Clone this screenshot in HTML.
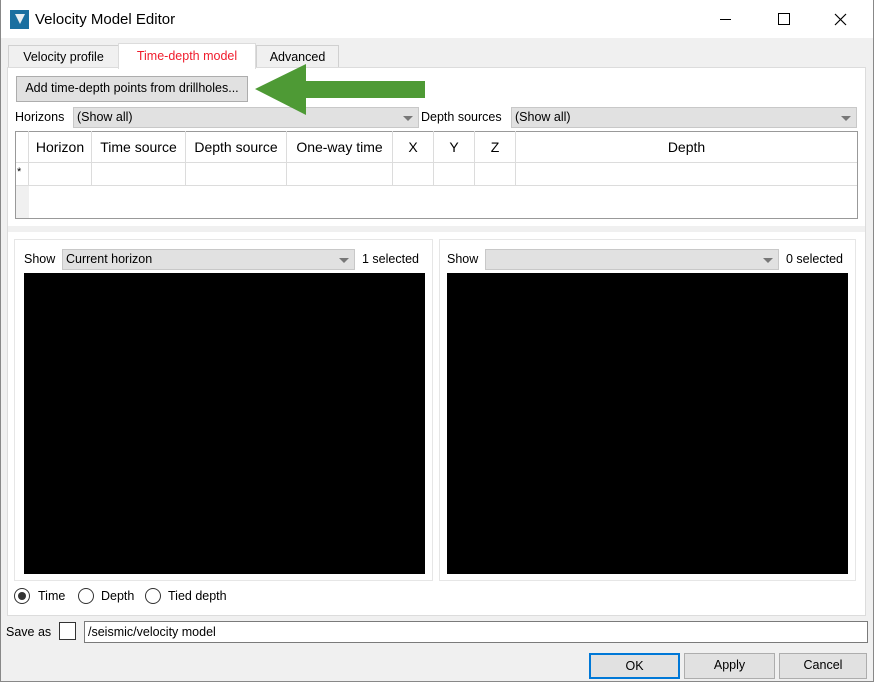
<!DOCTYPE html>
<html><head><style>
*{box-sizing:border-box}
body{margin:0;width:874px;height:682px;background:#f0f0f0;font-family:"Liberation Sans",sans-serif;font-size:12.5px;color:#000;position:relative;overflow:hidden}
.a{position:absolute}
.combo{position:absolute;background:#e1e1e1;border:1px solid #c8c8c8;padding:2px 0 0 3px;height:21px}
.combo:after{content:"";position:absolute;right:5px;top:8px;border-left:5px solid transparent;border-right:5px solid transparent;border-top:5px solid #777}
.btn{position:absolute;background:#e1e1e1;border:1px solid #adadad;text-align:center;line-height:22px}
.rad{position:absolute;width:16px;height:16px;border:1px solid #333;border-radius:50%;background:#fff}
.th{position:absolute;top:131px;height:32px;border-right:1px solid #dcdcdc;border-bottom:1px solid #dcdcdc;text-align:center;line-height:32px;font-size:14px}
.td{position:absolute;top:163px;height:23px;border-right:1px solid #dcdcdc;border-bottom:1px solid #dcdcdc}
</style></head><body>
<div class="a" style="left:0;top:0;width:874px;height:38px;background:#fff"></div>
<div class="a" style="left:10px;top:10px;width:19px;height:19px;background:#1a6fa0"></div>
<div class="a" style="left:15px;top:14px;border-left:5px solid transparent;border-right:5px solid transparent;border-top:10px solid #e8eef2"></div>
<div class="a" style="left:35px;top:11px;font-size:15px">Velocity Model Editor</div>
<div class="a" style="left:720px;top:19px;width:11px;height:1px;background:#000"></div>
<div class="a" style="left:778px;top:13px;width:12px;height:12px;border:1px solid #000"></div>
<svg class="a" style="left:834px;top:13px" width="13" height="13"><path d="M1,1 L12,12 M12,1 L1,12" stroke="#000" stroke-width="1.2"/></svg>
<div class="a" style="left:0;top:0;width:874px;height:682px;border:1px solid #888;border-top:none;pointer-events:none"></div>

<div class="a" style="left:8px;top:45px;width:111px;height:23px;border:1px solid #d0d0d0;background:#f0f0f0;text-align:center;line-height:22px">Velocity profile</div>
<div class="a" style="left:256px;top:45px;width:83px;height:23px;border:1px solid #d0d0d0;background:#f0f0f0;text-align:center;line-height:22px">Advanced</div>
<div class="a" style="left:7px;top:67px;width:859px;height:549px;background:#fff;border:1px solid #dcdcdc"></div>
<div class="a" style="left:118px;top:43px;width:138px;height:26px;background:#fff;border:1px solid #dcdcdc;border-bottom:none;text-align:center;line-height:24px;color:#f01c2c">Time-depth model</div>

<div class="btn" style="left:16px;top:76px;width:232px;height:26px">Add time-depth points from drillholes...</div>

<div class="a" style="left:15px;top:110px">Horizons</div>
<div class="combo" style="left:73px;top:107px;width:346px">(Show all)</div>
<div class="a" style="left:421px;top:110px">Depth sources</div>
<div class="combo" style="left:511px;top:107px;width:346px">(Show all)</div>
<svg class="a" style="left:254px;top:63px" width="174" height="53"><polygon points="1,26 52,1 52,18 171,18 171,35 52,35 52,52" fill="#4e9a35"/></svg>

<div class="a" style="left:15px;top:131px;width:843px;height:88px;border:1px solid #999;background:#fff"></div>
<div class="a" style="left:16px;top:186px;width:13px;height:32px;background:#f0f0f0"></div>
<div class="th" style="left:16px;width:13px"></div>
<div class="th" style="left:29px;width:63px">Horizon</div>
<div class="th" style="left:92px;width:94px">Time source</div>
<div class="th" style="left:186px;width:101px">Depth source</div>
<div class="th" style="left:287px;width:106px">One-way time</div>
<div class="th" style="left:393px;width:41px">X</div>
<div class="th" style="left:434px;width:41px">Y</div>
<div class="th" style="left:475px;width:41px">Z</div>
<div class="th" style="left:516px;width:341px;border-right:none">Depth</div>
<div class="td" style="left:16px;width:13px;font-size:11px;padding:3px 0 0 1px">*</div>
<div class="td" style="left:29px;width:63px"></div>
<div class="td" style="left:92px;width:94px"></div>
<div class="td" style="left:186px;width:101px"></div>
<div class="td" style="left:287px;width:106px"></div>
<div class="td" style="left:393px;width:41px"></div>
<div class="td" style="left:434px;width:41px"></div>
<div class="td" style="left:475px;width:41px"></div>
<div class="td" style="left:516px;width:341px;border-right:none"></div>

<div class="a" style="left:8px;top:226px;width:857px;height:6px;background:#f0f0f0"></div>

<div class="a" style="left:14px;top:239px;width:419px;height:342px;border:1px solid #e6e6e6"></div>
<div class="a" style="left:24px;top:252px">Show</div>
<div class="combo" style="left:62px;top:249px;width:293px">Current horizon</div>
<div class="a" style="left:362px;top:252px">1 selected</div>
<div class="a" style="left:24px;top:273px;width:401px;height:301px;background:#000"></div>

<div class="a" style="left:439px;top:239px;width:417px;height:342px;border:1px solid #e6e6e6"></div>
<div class="a" style="left:447px;top:252px">Show</div>
<div class="combo" style="left:485px;top:249px;width:294px"></div>
<div class="a" style="left:786px;top:252px">0 selected</div>
<div class="a" style="left:447px;top:273px;width:401px;height:301px;background:#000"></div>

<div class="rad" style="left:14px;top:588px"><div class="a" style="left:3px;top:3px;width:8px;height:8px;border-radius:50%;background:#333"></div></div>
<div class="a" style="left:38px;top:589px">Time</div>
<div class="rad" style="left:78px;top:588px"></div>
<div class="a" style="left:101px;top:589px">Depth</div>
<div class="rad" style="left:145px;top:588px"></div>
<div class="a" style="left:168px;top:589px">Tied depth</div>

<div class="a" style="left:6px;top:625px">Save as</div>
<div class="a" style="left:59px;top:622px;width:17px;height:18px;border:1px solid #333;background:#fff"></div>
<div class="a" style="left:84px;top:621px;width:784px;height:22px;border:1px solid #7a7a7a;background:#fff;padding:3px 0 0 3px">/seismic/velocity model</div>

<div class="btn" style="left:589px;top:653px;width:91px;height:26px;border:2px solid #0078d7">OK</div>
<div class="btn" style="left:684px;top:653px;width:91px;height:26px">Apply</div>
<div class="btn" style="left:779px;top:653px;width:88px;height:26px">Cancel</div>
</body></html>
